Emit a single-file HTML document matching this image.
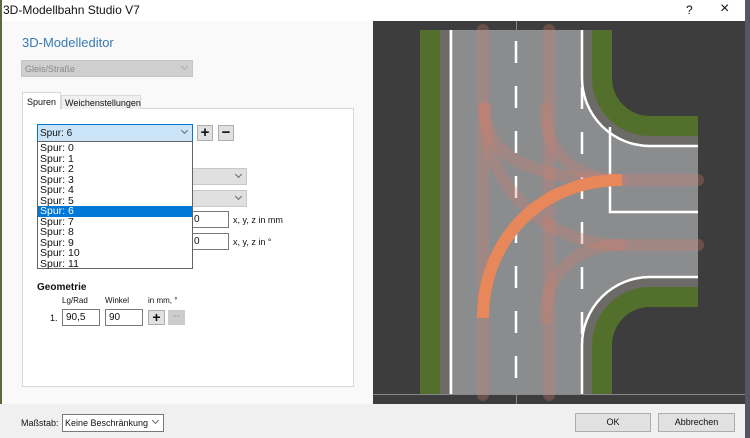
<!DOCTYPE html>
<html><head><meta charset="utf-8"><style>
*{margin:0;padding:0;box-sizing:border-box}
body{width:750px;height:438px;position:relative;overflow:hidden;background:#f9f9f9;font-family:"Liberation Sans",sans-serif;font-size:9px;color:#111}
.a{position:absolute}
.combo{position:absolute;border:1px solid #adadad;background:#e5e5e5}
.chev{position:absolute;right:5px;top:3px;width:5px;height:5px;border-right:1px solid #666;border-bottom:1px solid #666;transform:rotate(45deg)}
.inp{position:absolute;border:1px solid #7a7a7a;background:#fff;padding:2px 3px;font-size:10px}
.btn{position:absolute;border:1px solid #adadad;background:#e1e1e1;text-align:center}
.li{height:10.5px;line-height:10.5px;padding-left:2px;font-size:10.5px}
</style></head><body>
<div class="a" style="left:0;top:0;width:750px;height:21px;background:#fff"></div>
<div class="a" style="left:3px;top:3px;font-size:12px">3D-Modellbahn Studio V7</div>
<div class="a" style="left:686px;top:3px;font-size:12px">?</div>
<div class="a" style="left:720px;top:0px;font-size:16px;font-weight:300">×</div>
<div class="a" style="left:745px;top:0;width:5px;height:438px;background:#556"></div>
<div class="a" style="left:0;top:0;width:2px;height:438px;background:#5a6a40"></div>

<div class="a" style="left:22px;top:35px;font-size:13px;color:#3a7ab3">3D-Modelleditor</div>
<div class="combo" style="left:21px;top:60px;width:172px;height:17px;background:#cfcfcf;border-color:#c6c6c6"><span class="a" style="left:3px;top:3px;color:#888">Gleis/Straße</span><span class="chev" style="border-color:#aaa"></span></div>

<div class="a" style="left:22px;top:108px;width:332px;height:279px;background:#fff;border:1px solid #d9d9d9"></div>
<div class="a" style="left:22px;top:92px;width:39px;height:18px;background:#fff;border:1px solid #d9d9d9;border-bottom:none;padding:4px 0 0 4px">Spuren</div>
<div class="a" style="left:61px;top:95px;width:80px;height:14px;background:#f0f0f0;border:1px solid #d9d9d9;border-bottom:none;padding:2px 0 0 3px">Weichenstellungen</div>

<div class="combo" style="left:37px;top:124px;width:156px;height:18px;background:#cce4f7;border-color:#0078d7"><span class="a" style="left:2px;top:3px;font-size:10px">Spur: 6</span><span class="chev"></span></div>
<div class="btn" style="left:197px;top:125px;width:16px;height:16px;font-size:15px;line-height:13px;font-weight:bold">+</div>
<div class="btn" style="left:218px;top:125px;width:16px;height:16px;font-size:15px;line-height:13px;font-weight:bold">−</div>

<div class="combo" style="left:190px;top:168px;width:57px;height:17px;background:#e0e0e0;border-color:#c8c8c8"><span class="chev"></span></div>
<div class="combo" style="left:190px;top:190px;width:57px;height:17px;background:#e0e0e0;border-color:#c8c8c8"><span class="chev"></span></div>
<div class="inp" style="left:190px;top:211px;width:39px;height:17px">0</div>
<div class="inp" style="left:190px;top:233px;width:39px;height:17px">0</div>
<div class="a" style="left:233px;top:215px">x, y, z in mm</div>
<div class="a" style="left:233px;top:237px">x, y, z in °</div>

<div class="a" style="left:37px;top:141px;width:156px;height:128px;background:#fff;border:1px solid #646464;padding-top:1px">
<div class="li">Spur: 0</div><div class="li">Spur: 1</div><div class="li">Spur: 2</div><div class="li">Spur: 3</div><div class="li">Spur: 4</div><div class="li">Spur: 5</div><div class="li" style="background:#0078d7;color:#fff">Spur: 6</div><div class="li">Spur: 7</div><div class="li">Spur: 8</div><div class="li">Spur: 9</div><div class="li">Spur: 10</div><div class="li">Spur: 11</div>
</div>

<div class="a" style="left:37px;top:282px;font-weight:bold;font-size:10px">Geometrie</div>
<div class="a" style="left:62px;top:296px;font-size:8px">Lg/Rad</div>
<div class="a" style="left:105px;top:296px;font-size:8px">Winkel</div>
<div class="a" style="left:148px;top:296px;font-size:8px">in mm, °</div>
<div class="a" style="left:50px;top:313px">1.</div>
<div class="inp" style="left:62px;top:309px;width:38px;height:17px">90,5</div>
<div class="inp" style="left:105px;top:309px;width:38px;height:17px">90</div>
<div class="btn" style="left:148px;top:310px;width:17px;height:15px;font-size:14px;line-height:12px;font-weight:bold">+</div>
<div class="btn" style="left:168px;top:310px;width:17px;height:15px;font-size:10px;line-height:12px;color:#999;background:#ccc;border-color:#ccc">--</div>

<div class="a" style="left:0;top:404px;width:745px;height:34px;background:#f0f0f0"></div>
<div class="a" style="left:21px;top:418px">Maßstab:</div>
<div class="combo" style="left:62px;top:414px;width:102px;height:18px;background:#fff;border-color:#7a7a7a"><span class="a" style="left:2px;top:3px">Keine Beschränkung</span><span class="chev"></span></div>
<div class="btn" style="left:575px;top:413px;width:76px;height:19px;line-height:17px">OK</div>
<div class="btn" style="left:658px;top:413px;width:77px;height:19px;line-height:17px">Abbrechen</div>

<svg class="a" style="left:0;top:0" width="750" height="438" viewBox="0 0 750 438">
<rect x="373" y="21" width="372" height="383" fill="#3d3d3d"/>
<rect x="420" y="30" width="20" height="365" fill="#52702c"/>
<rect x="440" y="30" width="9" height="365" fill="#6d6b67"/>
<rect x="449" y="30" width="249" height="365" fill="#8a8c8e"/>
<path d="M583,30 L583,78 A67,67 0 0 0 650,145 L698,145 L698,30 Z" fill="#6d6b67"/>
<path d="M592,30 L592,78 A58,58 0 0 0 650,136 L698,136 L698,30 Z" fill="#52702c"/>
<path d="M612,30 L612,78 A38,38 0 0 0 650,116 L698,116 L698,30 Z" fill="#3d3d3d"/>
<path d="M583,395 L583,345 A67,67 0 0 1 650,278 L698,278 L698,395 Z" fill="#6d6b67"/>
<path d="M592,395 L592,345 A58,58 0 0 1 650,287 L698,287 L698,395 Z" fill="#52702c"/>
<path d="M612,395 L612,345 A38,38 0 0 1 650,307 L698,307 L698,395 Z" fill="#3d3d3d"/>
<g fill="none" stroke="#fff" stroke-width="2.5">
<path d="M451,30 V395"/>
<path d="M582,30 L582,78 A68,68 0 0 0 650,146 L698,146"/>
<path d="M582,395 L582,345 A68,68 0 0 1 650,277 L698,277"/>
<path d="M610,127 V212 H698"/>
<path d="M516,41 V395" stroke-dasharray="22 23" stroke-width="2.5"/>
<path d="M582,87 V340" stroke-dasharray="22 23"/>
</g>
<g fill="none" stroke="rgba(215,125,105,0.3)" stroke-width="12" stroke-linecap="round">
<path d="M483,30 V395"/><path d="M549,30 V395"/>
<path d="M485,108 C485,160 540,180 620,180 L698,180"/>
<path d="M545,108 C545,150 570,178 620,180"/>
<path d="M485,108 C485,200 560,245 620,245 L698,245"/>
<path d="M545,318 C545,270 580,245 620,245"/>
</g>
<path d="M483,318 C483,240 540,180 622,180" fill="none" stroke="#e8875a" stroke-width="12"/>
<rect x="373" y="394" width="372" height="1" fill="#888"/>
<rect x="516" y="21" width="1" height="9" fill="#888"/>
<rect x="516" y="395" width="1" height="9" fill="#888"/>
</svg>
</body></html>
